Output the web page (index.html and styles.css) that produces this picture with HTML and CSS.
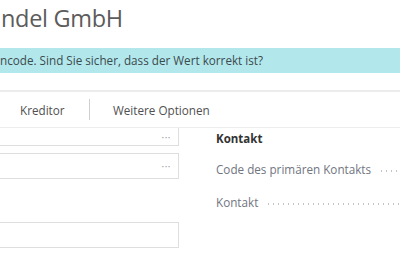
FILE: index.html
```html
<!DOCTYPE html>
<html lang="de">
<head>
  <meta charset="UTF-8">
  <title>Kreditor</title>
  <link rel="stylesheet" href="styles.css">
</head>
<body>
  <div class="page">
    <h1 class="title">ndel GmbH</h1>

    <div class="notice">ncode. Sind Sie sicher, dass der Wert korrekt ist?</div>

    <div class="actions">
      <span class="action first">Kreditor</span>
      <span class="divider"></span>
      <span class="action">Weitere Optionen</span>
    </div>

    <div class="content">
      <div class="left-col">
        <div class="field cut"><span class="more">···</span></div>
        <div class="field"><span class="more">···</span></div>
        <div class="field empty"></div>
      </div>
      <div class="right-col">
        <div class="group-title">Kontakt</div>
        <div class="row">
          <span class="label">Code des primären Kontakts</span>
          <span class="leader"></span>
        </div>
        <div class="row">
          <span class="label">Kontakt</span>
          <span class="leader"></span>
        </div>
      </div>
    </div>
  </div>
</body>
</html>
```

FILE: styles.css
```css
body {
  margin: 0;
  background-color: #ffffff;
  font-family: "Open Sans", "Noto Sans", sans-serif;
  overflow: hidden;
}

.page {
  width: 400px;
  height: 267px;
}

.title {
  margin: 0;
  height: 48px;
  padding-left: 1px;
  font-size: 23.5px;
  font-weight: 400;
  line-height: 37px;
  color: #5c5c5c;
  letter-spacing: -0.3px;
}

.notice {
  height: 25px;
  line-height: 25px;
  background-color: #b2e8ec;
  color: #3c4a4c;
  font-size: 11.7px;
  white-space: nowrap;
}

.actions {
  display: flex;
  align-items: center;
  margin-top: 17px;
  height: 35px;
  border-top: 2px solid #ececec;
  border-bottom: 1px solid #ececec;
  font-size: 11.7px;
  color: #505050;
}

.action.first {
  padding-left: 20px;
  width: 69px;
}

.divider {
  width: 1px;
  height: 21px;
  background-color: #cfcfcf;
  margin-right: 23px;
}

.content {
  display: flex;
}

.left-col {
  width: 179px;
  flex: none;
}

.field {
  height: 24px;
  border: 1px solid #dedede;
  border-left: none;
  box-sizing: content-box;
  display: flex;
  align-items: center;
  justify-content: flex-end;
  margin-bottom: 7px;
}

.field.cut {
  height: 17px;
  border-top: none;
}

.field.empty {
  margin-top: 43px;
}

.more {
  font-size: 10px;
  color: #9a9a9a;
  padding-right: 7px;
  letter-spacing: 0.5px;
}

.right-col {
  flex: 1;
  padding-left: 37px;
  padding-top: 3px;
  overflow: hidden;
}

.group-title {
  font-size: 11.5px;
  font-weight: 700;
  color: #333333;
  height: 16px;
  line-height: 16px;
}

.row {
  display: flex;
  align-items: center;
  height: 16px;
  margin-top: 14px;
  white-space: nowrap;
}

.row + .row {
  margin-top: 17px;
}

.label {
  font-size: 11.7px;
  color: #707580;
}

.leader {
  flex: 1;
  height: 2px;
  margin-left: 8px;
  margin-top: 3px;
  background-image: radial-gradient(circle, #c2c4c8 0.8px, transparent 1px);
  background-size: 5px 2px;
}
```
